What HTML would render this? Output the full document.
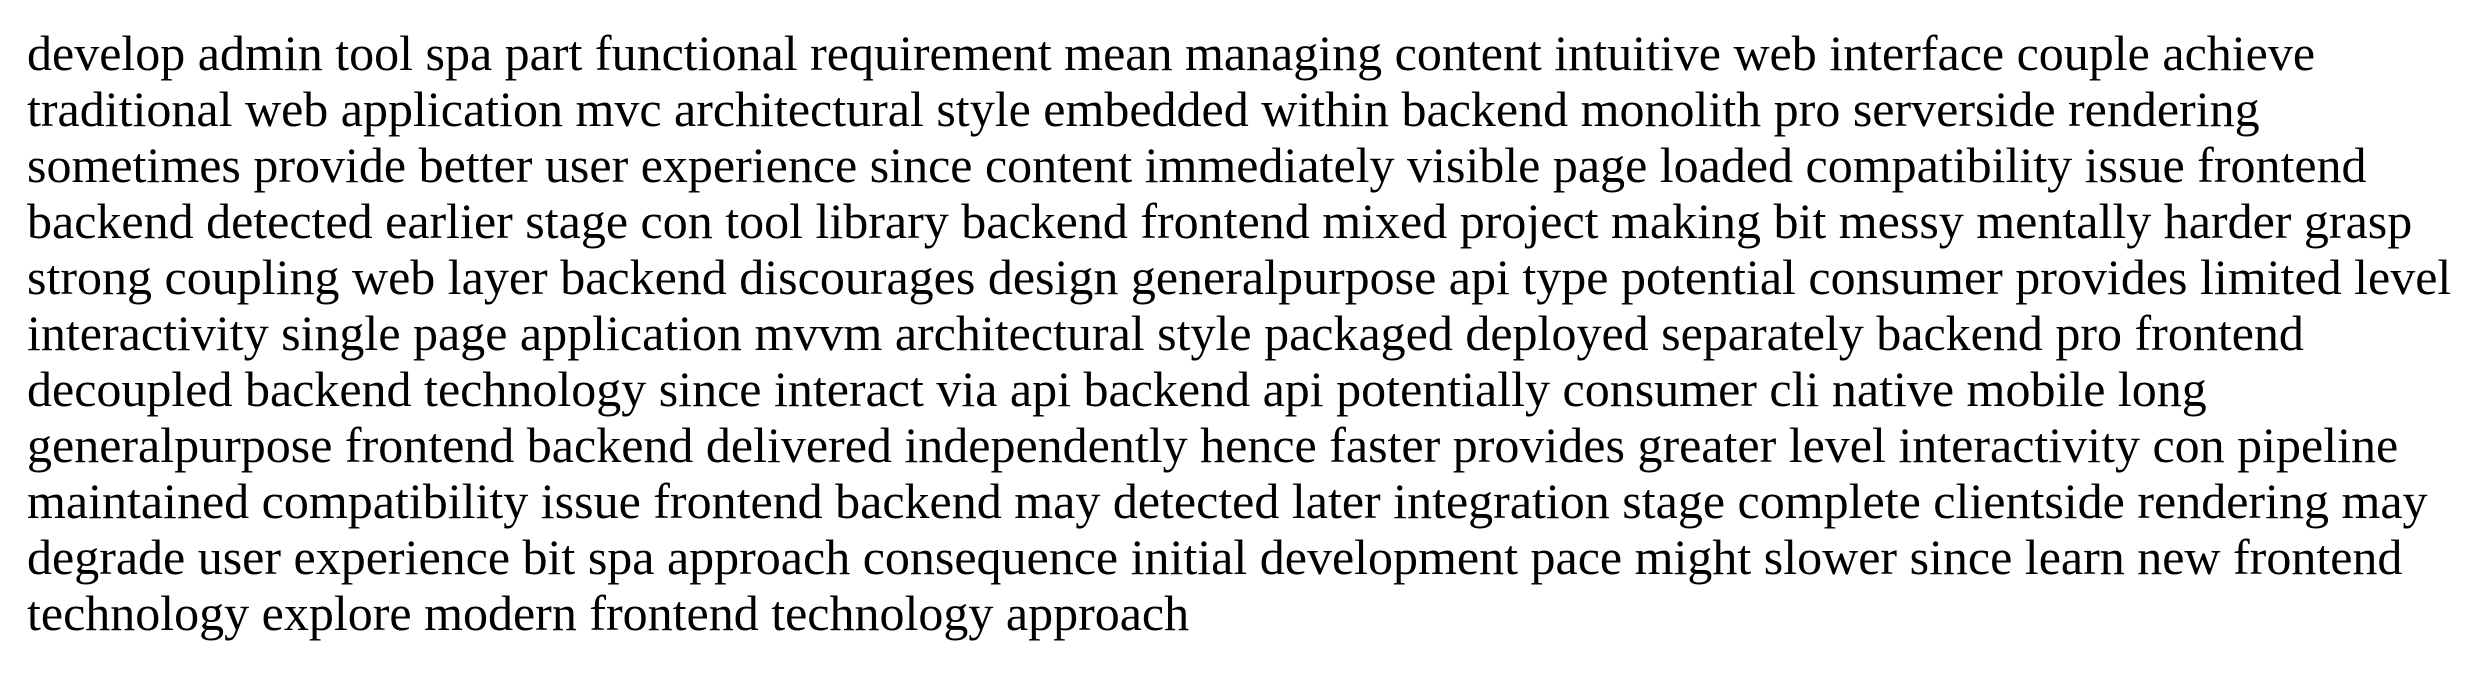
<!DOCTYPE html>
<html><head><meta charset="utf-8"><style>
html,body{margin:0;padding:0;background:#fff;width:2480px;height:692px;overflow:hidden}
.t{position:absolute;left:27px;top:25px;font-family:"Liberation Serif",serif;font-size:50px;line-height:56px;color:#000;white-space:nowrap}
</style></head><body><div class="t">
develop admin tool spa part functional requirement mean managing content intuitive web interface couple achieve<br>
traditional web application mvc architectural style embedded within backend monolith pro serverside rendering<br>
sometimes provide better user experience since content immediately visible page loaded compatibility issue frontend<br>
backend detected earlier stage con tool library backend frontend mixed project making bit messy mentally harder grasp<br>
strong coupling web layer backend discourages design generalpurpose api type potential consumer provides limited level<br>
interactivity single page application mvvm architectural style packaged deployed separately backend pro frontend<br>
decoupled backend technology since interact via api backend api potentially consumer cli native mobile long<br>
generalpurpose frontend backend delivered independently hence faster provides greater level interactivity con pipeline<br>
maintained compatibility issue frontend backend may detected later integration stage complete clientside rendering may<br>
degrade user experience bit spa approach consequence initial development pace might slower since learn new frontend<br>
technology explore modern frontend technology approach
</div></body></html>
